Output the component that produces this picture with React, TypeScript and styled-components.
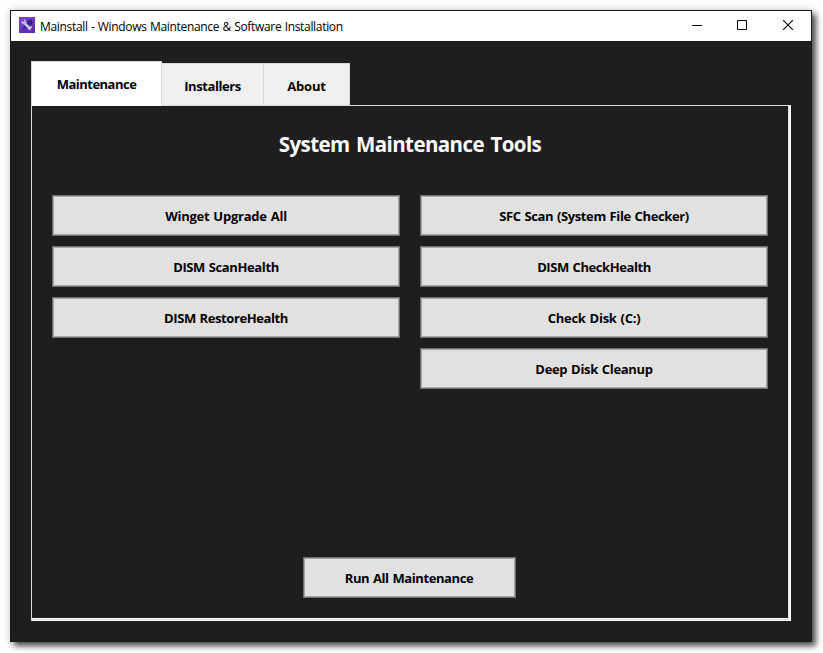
import React from 'react';
import styled, { createGlobalStyle } from 'styled-components';

const GlobalStyle = createGlobalStyle`
  * { box-sizing: border-box; }
  body {
    margin: 0;
    background: #fff;
    font-family: "Open Sans", "Noto Sans", sans-serif;
  }
`;

const Desktop = styled.div`
  height: 653px;
  padding: 10px 11px 11px 10px;
  overflow: hidden;
`;

const Window = styled.div`
  display: flex;
  flex-direction: column;
  width: 802px;
  height: 632px;
  border: 1px solid #1c1c1e;
  background: #1e1e1e;
  box-shadow: 4px 4px 6px rgba(0, 0, 0, 0.68), 0 0 9px rgba(0, 0, 0, 0.16);
`;

const TitleBar = styled.header`
  display: flex;
  align-items: center;
  flex: none;
  height: 30px;
  padding-left: 8px;
  background: #fff;
`;

const AppIcon = styled.svg`
  display: block;
  width: 16px;
  height: 16px;
  margin-top: -2px;
`;

const WindowTitle = styled.span`
  flex: 1;
  margin-left: 5px;
  padding-top: 1px;
  color: #000;
  font-size: 12px;
  line-height: 29px;
  letter-spacing: -0.32px;
  word-spacing: 0.5px;
  white-space: nowrap;
`;

const CaptionButton = styled.button<{ $width: number }>`
  display: flex;
  align-items: center;
  justify-content: center;
  width: ${({ $width }) => $width}px;
  height: 30px;
  padding: 0 0 2px;
  border: 0;
  background: transparent;

  svg {
    display: block;
    fill: none;
    stroke: #000;
  }
`;

const Content = styled.main`
  display: flex;
  flex: 1;
  flex-direction: column;
  padding: 20px 20px 20px;
`;

const TabList = styled.nav`
  display: flex;
  align-items: flex-end;
  height: 45px;
  z-index: 1;
`;

const Tab = styled.button<{ $selected?: boolean; $width: number; $tracking: number }>`
  width: ${({ $width }) => $width}px;
  height: ${({ $selected }) => ($selected ? 45 : 43)}px;
  padding: ${({ $selected }) => ($selected ? 0 : 3)}px 0 0;
  border: 1px solid #d9d9d9;
  border-left-width: ${({ $selected }) => ($selected ? 1 : 0)}px;
  border-bottom-width: ${({ $selected }) => ($selected ? 0 : 1)}px;
  background: ${({ $selected }) => ($selected ? '#fff' : '#f0f0f0')};
  color: #000;
  font: 700 13px "Open Sans", "Noto Sans", sans-serif;
  letter-spacing: ${({ $tracking }) => $tracking}px;
`;

const Panel = styled.section`
  display: flex;
  flex: 1;
  flex-direction: column;
  align-items: center;
  width: 760px;
  margin-top: -1px;
  border-top: 1px solid #dcdcdc;
  border-left: 1px solid #dcdcdc;
  border-right: 2px solid #fafafa;
  border-bottom: 1px solid #fafafa;
`;

const PanelInner = styled.div`
  display: flex;
  flex: 1;
  flex-direction: column;
  align-self: stretch;
  border-right: 1px solid #dcdcdc;
  border-bottom: 1px solid #d9d9d9;
`;

const PanelFace = styled.div`
  display: flex;
  flex: 1;
  flex-direction: column;
  align-items: center;
  align-self: stretch;
  padding: 20px 20px 20px;
  border-bottom: 1px solid #fff;
`;

const Heading = styled.h1`
  margin: 0;
  height: 36px;
  color: #fff;
  font-size: 20.5px;
  font-weight: 700;
  line-height: 36px;
  letter-spacing: -0.6px;
  word-spacing: 1.8px;
`;

const Columns = styled.div`
  display: grid;
  grid-template-columns: 348px 348px;
  gap: 20px;
  align-self: stretch;
  margin-top: 33px;
`;

const Column = styled.div`
  display: flex;
  flex-direction: column;
  gap: 10px;
`;

const ToolButton = styled.button<{ $tracking: number }>`
  height: 41px;
  padding: 1px 0 0;
  border: 1px solid #6e6e6e;
  background: #e1e1e1;
  box-shadow: inset 0 0 0 1px #a6a6a6;
  color: #000;
  font: 700 13px "Open Sans", "Noto Sans", sans-serif;
  letter-spacing: ${({ $tracking }) => $tracking}px;
  word-spacing: 0.8px;
  white-space: nowrap;
`;

const RunButton = styled(ToolButton)`
  width: 213px;
  margin: auto 2px 0 0;
`;

type Tool = { label: string; tracking: number };

const leftTools: Tool[] = [
  { label: 'Winget Upgrade All', tracking: -0.24 },
  { label: 'DISM ScanHealth', tracking: -0.38 },
  { label: 'DISM RestoreHealth', tracking: -0.4 },
];

const rightTools: Tool[] = [
  { label: 'SFC Scan (System File Checker)', tracking: -0.38 },
  { label: 'DISM CheckHealth', tracking: -0.42 },
  { label: 'Check Disk (C:)', tracking: -0.26 },
  { label: 'Deep Disk Cleanup', tracking: -0.32 },
];

const ToolColumn = ({ tools }: { tools: Tool[] }) => (
  <Column>
    {tools.map(({ label, tracking }) => (
      <ToolButton key={label} $tracking={tracking}>{label}</ToolButton>
    ))}
  </Column>
);

export default function App() {
  return (
    <>
      <GlobalStyle />
      <Desktop>
        <Window>
          <TitleBar>
            <AppIcon viewBox="0 0 16 16">
              <defs>
                <linearGradient id="tile" x1="0" y1="0" x2="0.4" y2="1">
                  <stop offset="0" stopColor="#7d45cf" />
                  <stop offset="1" stopColor="#5a2fb4" />
                </linearGradient>
              </defs>
              <rect width="16" height="16" fill="url(#tile)" />
              <path d="M8 4 10 2.5 13 3 13.5 6 12 8.5 9 8Z" fill="#3a217f" />
              <path d="m4 12 6-6" stroke="#40248a" strokeWidth="2" />
              <path d="m5 5.6 6 6" stroke="#d3c6ee" strokeWidth="2.2" strokeLinecap="round" />
              <path d="M2.5 4.6 4.3 6.6 6.7 5.4 5.3 2.7" fill="none" stroke="#c3b2e8" strokeWidth="1.5" />
              <path d="m9.6 12.8 1-2.2 2.4-.6" fill="none" stroke="#d9cdf0" strokeWidth="1.4" />
            </AppIcon>
            <WindowTitle>Mainstall - Windows Maintenance &amp; Software Installation</WindowTitle>
            <CaptionButton $width={44} aria-label="Minimize">
              <svg width="10" height="10"><path d="M0 5.5h10" /></svg>
            </CaptionButton>
            <CaptionButton $width={46} aria-label="Maximize">
              <svg width="10" height="10"><path d="M.5.5h9v9h-9z" /></svg>
            </CaptionButton>
            <CaptionButton $width={46} aria-label="Close">
              <svg width="10" height="10"><path d="m0 0 10 10M10 0 0 10" strokeWidth="1.1" /></svg>
            </CaptionButton>
          </TitleBar>
          <Content>
            <TabList>
              <Tab $selected $width={131} $tracking={-0.5}>Maintenance</Tab>
              <Tab $width={102} $tracking={-0.42}>Installers</Tab>
              <Tab $width={86} $tracking={-0.15}>About</Tab>
            </TabList>
            <Panel>
              <PanelInner>
                <PanelFace>
                  <Heading>System Maintenance Tools</Heading>
                  <Columns>
                    <ToolColumn tools={leftTools} />
                    <ToolColumn tools={rightTools} />
                  </Columns>
                  <RunButton $tracking={-0.4}>Run All Maintenance</RunButton>
                </PanelFace>
              </PanelInner>
            </Panel>
          </Content>
        </Window>
      </Desktop>
    </>
  );
}
